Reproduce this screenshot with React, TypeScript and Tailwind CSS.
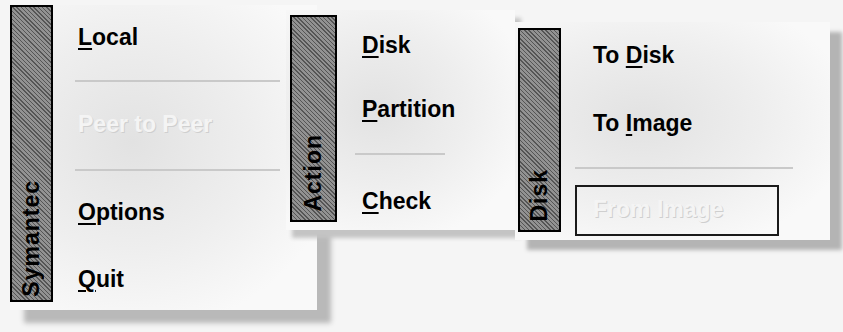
import React from "react";

function Side({ title, className }: { title: string; className: string }) {
  return (
    <div
      className={`flex shrink-0 flex-col items-center justify-end border-2 border-black bg-[repeating-linear-gradient(45deg,#555555_0,#555555_1px,#929292_1px,#929292_3px)] ${className}`}
    >
      <span className="rotate-180 text-[23px] leading-none tracking-[1px] [writing-mode:vertical-rl]">
        {title}
      </span>
    </div>
  );
}

function Sep({ className }: { className: string }) {
  return <div className={`h-[2px] bg-[#c9c9c9] ${className}`} />;
}

function Text({ children, disabled }: { children: React.ReactNode; disabled?: boolean }) {
  return (
    <div
      className={
        disabled
          ? "h-6 text-[23px] leading-6 whitespace-nowrap text-[#f4f4f4] [text-shadow:1px_1px_0_#cfcfcf]"
          : "h-6 text-[23px] leading-6 whitespace-nowrap"
      }
    >
      {children}
    </div>
  );
}

function U({ children }: { children: React.ReactNode }) {
  return <span className="underline decoration-2 underline-offset-[3px]">{children}</span>;
}

const panel =
  "flex bg-[radial-gradient(ellipse_at_40%_45%,#e2e2e2_0%,#eeeeee_45%,#f9f9f9_80%)]";

export default function App() {
  return (
    <div className="h-[332px] w-[843px] overflow-hidden bg-[#f5f5f5] font-['Liberation_Sans',Arial,sans-serif] font-bold text-black">
      <div className="flex items-start">
        {/* Symantec */}
        <div
          className={`${panel} relative z-0 ml-[10px] mt-[5px] h-[305px] w-[307px] shadow-[14px_13px_5px_#b9b9b9]`}
        >
          <Side title="Symantec" className="h-[297px] w-[43px] pb-[3px]" />
          <div className="ml-[25px] flex flex-col pt-[20px]">
            <Text>
              <U>L</U>ocal
            </Text>
            <Sep className="mt-[31px] w-[205px] -ml-[3px]" />
            <div className="mt-[30px]">
              <Text disabled>Peer to Peer</Text>
            </div>
            <Sep className="mt-[33px] w-[205px] -ml-[3px]" />
            <div className="mt-[29px]">
              <Text>
                <U>O</U>ptions
              </Text>
            </div>
            <div className="mt-[43px]">
              <Text>
                <U>Q</U>uit
              </Text>
            </div>
          </div>
        </div>

        {/* Action */}
        <div
          className={`${panel} relative z-10 -ml-[31px] mt-[10px] h-[220px] w-[229px] shadow-[6px_8px_4px_#c4c4c4]`}
        >
          <Side title="Action" className="ml-[4px] mt-[5px] h-[207px] w-[47px] pb-[8px]" />
          <div className="ml-[25px] flex flex-col pt-[23px]">
            <Text>
              <U>D</U>isk
            </Text>
            <div className="mt-[40px]">
              <Text>
                <U>P</U>artition
              </Text>
            </div>
            <Sep className="mt-[32px] w-[90px] -ml-[7px]" />
            <div className="mt-[34px]">
              <Text>
                <U>C</U>heck
              </Text>
            </div>
          </div>
        </div>

        {/* Disk */}
        <div
          className={`${panel} relative z-20 mt-[22px] h-[218px] w-[315px] shadow-[12px_10px_4px_#b4b4b4]`}
        >
          <Side title="Disk" className="ml-[3px] mt-[6px] h-[204px] w-[43px] pb-[8px]" />
          <div className="ml-[14px] flex flex-col pt-[21px]">
            <div className="pl-[18px]">
              <Text>
                To <U>D</U>isk
              </Text>
            </div>
            <div className="mt-[44px] pl-[18px]">
              <Text>
                To <U>I</U>mage
              </Text>
            </div>
            <Sep className="mt-[32px] w-[218px]" />
            <div className="mt-[16px] h-[51px] w-[204px] border-2 border-[#1a1a1a] pl-[16px] pt-[10px]">
              <Text disabled>From Image</Text>
            </div>
          </div>
        </div>
      </div>
    </div>
  );
}
